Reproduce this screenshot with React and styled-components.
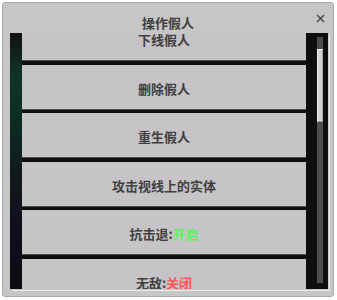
import React from 'react';
import styled, { createGlobalStyle } from 'styled-components';

const GlobalStyle = createGlobalStyle`
    body {
        margin: 0;
        background: #ffffff;
        font-family: "Noto Sans CJK SC", "Noto Sans", sans-serif;
    }
`;

const Panel = styled.div`
    box-sizing: border-box;
    width: 332px;
    height: 295px;
    margin: 2px 3px 3px 2px;
    background: #c6c6c6;
    border: 1px solid #a9a9a9;
    border-radius: 3px;
    display: flex;
    flex-direction: column;
`;

const Header = styled.div`
    display: grid;
    grid-template-columns: 1fr auto 1fr;
    align-items: end;
    height: 30px;
    padding-bottom: 3px;
    box-sizing: border-box;
`;

const Title = styled.div`
    grid-column: 2;
    font-size: 13px;
    line-height: 15px;
    font-weight: 700;
    color: #404040;
`;

const Close = styled.button`
    grid-column: 3;
    justify-self: end;
    align-self: start;
    margin: 11px 8px 0 0;
    padding: 0;
    border: 0;
    background: none;
    width: 9px;
    height: 9px;
    display: flex;
`;

const Frame = styled.div`
    display: flex;
    width: 318px;
    height: 256px;
    margin-left: 7px;
    background: #0e0e0e;
    box-shadow: 1px 1px 0 #c6c6c6, 2px 2px 0 #ececec;
`;

const Backdrop = styled.div`
    width: 12px;
    background: linear-gradient(180deg, #121212 0%, #0f362b 18%, #0c2c23 34%, #111a1e 55%, #100d1a 80%, #0e0c14 100%);
`;

const Viewport = styled.div`
    width: 284px;
    overflow: hidden;
`;

const List = styled.div`
    display: flex;
    flex-direction: column;
    gap: 3.5px;
    margin-top: -17px;
`;

const Item = styled.div`
    box-sizing: border-box;
    height: 45px;
    flex-shrink: 0;
    background: #c7c4c7;
    border-bottom: 1px solid #4e4e4e;
    display: flex;
    align-items: center;
    justify-content: center;
    font-size: 13px;
    font-weight: 700;
    color: #404040;
    padding-top: 3px;
`;

const State = styled.span`
    color: ${props => props.on ? '#5cf25c' : '#ff5555'};
`;

const ScrollColumn = styled.div`
    width: 22px;
    box-sizing: border-box;
    padding: 4px 0 0 11px;
`;

const Track = styled.div`
    width: 6px;
    height: 246px;
    background: #4d4d4d;
    padding-top: 12px;
    box-sizing: border-box;
`;

const Thumb = styled.div`
    width: 6px;
    height: 73px;
    box-sizing: border-box;
    background: #d2d2d2;
    border-top: 1px solid #ffffff;
    border-left: 1px solid #f2f2f2;
    border-right: 1px solid #a8a8a8;
    border-bottom: 1px solid #9a9a9a;
`;

const items = [
    { label: '下线假人' },
    { label: '删除假人' },
    { label: '重生假人' },
    { label: '攻击视线上的实体' },
    { label: '抗击退:', state: '开启', on: true },
    { label: '无敌:', state: '关闭', on: false },
];

export default function App() {
    return (
        <>
            <GlobalStyle />
            <Panel>
                <Header>
                    <Title>操作假人</Title>
                    <Close aria-label="关闭">
                        <svg width="9" height="9" viewBox="0 0 9 9">
                            <path d="M1 1 L8 8 M8 1 L1 8" stroke="#454545" strokeWidth="1.4" />
                        </svg>
                    </Close>
                </Header>
                <Frame>
                    <Backdrop />
                    <Viewport>
                        <List>
                            {items.map(item => (
                                <Item key={item.label}>
                                    {item.label}
                                    {item.state && <State on={item.on}>{item.state}</State>}
                                </Item>
                            ))}
                        </List>
                    </Viewport>
                    <ScrollColumn>
                        <Track>
                            <Thumb />
                        </Track>
                    </ScrollColumn>
                </Frame>
            </Panel>
        </>
    );
}
